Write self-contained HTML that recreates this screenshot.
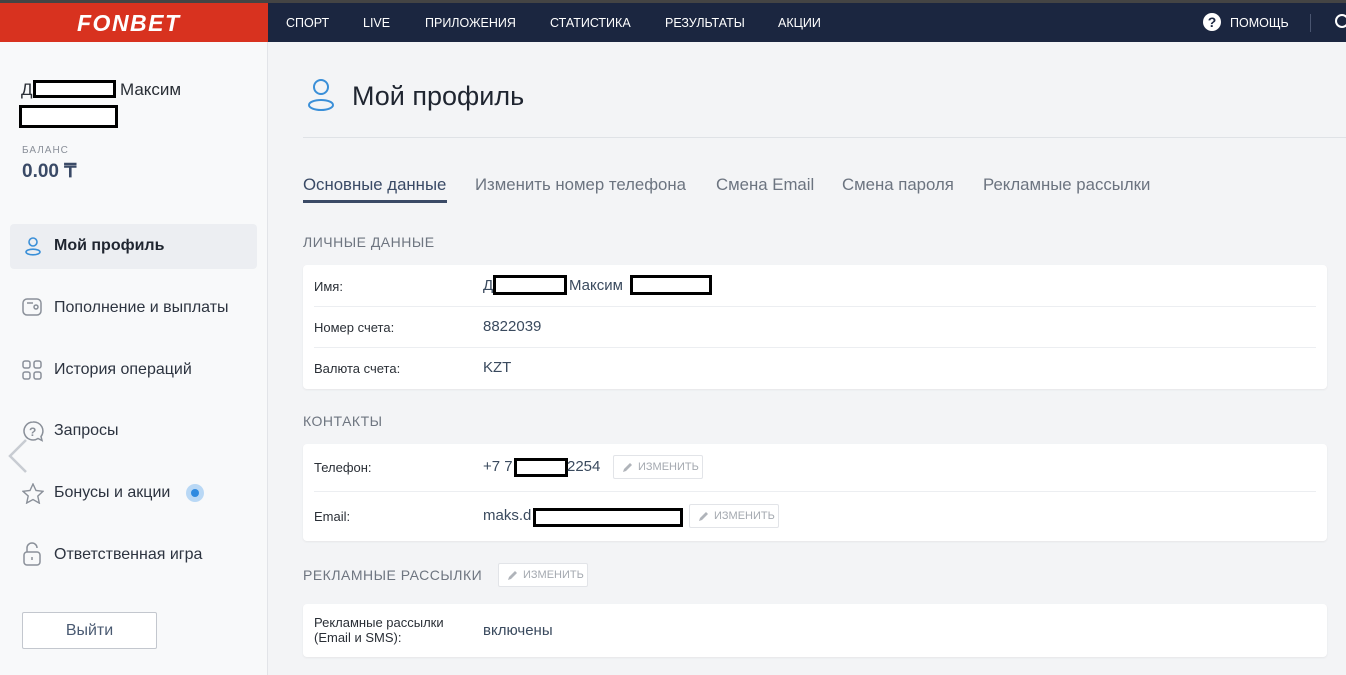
<!DOCTYPE html>
<html><head><meta charset="utf-8"><style>
*{margin:0;padding:0;box-sizing:border-box}
body{width:1346px;height:675px;overflow:hidden;background:#f3f4f6;font-family:"Liberation Sans","Noto Sans CJK SC",sans-serif;position:relative;color:#1f2b3a}
.a{position:absolute;white-space:nowrap}
.red{position:absolute;left:0;top:3px;width:268px;height:39px;background:#d8321f}
.nav{position:absolute;left:268px;top:3px;right:0;height:39px;background:#1b2640}
.topstrip{position:absolute;left:0;top:0;right:0;height:3px;background:#444}
.nl{color:#fff;font-size:12.5px;top:16px}
.side{position:absolute;left:0;top:42px;width:268px;height:633px;background:#f8f9fa;border-right:1px solid #e2e4e8}
.blk{position:absolute;border:3px solid #000;background:#fff}
.mi{font-size:16px;color:#2d3440}
.card{position:absolute;left:303px;width:1024px;background:#fff;border-radius:4px;box-shadow:0 1px 2px rgba(0,0,0,.06)}
.lbl{font-size:13px;color:#2a2f36}
.val{font-size:15px;color:#3a4a5e}
.sep{position:absolute;left:11px;right:11px;height:1px;background:#eceef1}
.sec{font-size:14px;color:#6e7580;letter-spacing:.5px}
.btn{position:absolute;border:1px solid #e2e4e8;border-radius:2px;height:24px;font-size:11px;color:#a4a9b0;line-height:22px;padding-left:24px;background:#fff}
.btn svg{position:absolute;left:8px;top:5px}
.tab{font-size:16.8px;color:#6c7480;top:175px}
</style></head><body>
<div class="topstrip"></div>
<div class="red"></div>
<div class="a" style="left:77px;top:10px;color:#fff;font-size:23px;font-weight:bold;font-style:italic;letter-spacing:1.5px">FONBET</div>
<div class="nav"></div>
<div class="a nl" style="left:286px">СПОРТ</div>
<div class="a nl" style="left:363px">LIVE</div>
<div class="a nl" style="left:425px">ПРИЛОЖЕНИЯ</div>
<div class="a nl" style="left:550px">СТАТИСТИКА</div>
<div class="a nl" style="left:665px">РЕЗУЛЬТАТЫ</div>
<div class="a nl" style="left:778px">АКЦИИ</div>
<div class="a" style="left:1203px;top:13px;width:18px;height:18px;border-radius:50%;background:#fff;color:#1b2640;font-weight:bold;font-size:14px;text-align:center;line-height:18px">?</div>
<div class="a nl" style="left:1230px">ПОМОЩЬ</div>
<div class="a" style="left:1310px;top:14px;width:1px;height:18px;background:#4a5570"></div>
<div class="a" style="left:1335px;top:14px;width:14px;height:14px;border:2px solid #fff;border-radius:50%"></div>

<div class="side"></div>
<div class="a" style="left:21px;top:80px;font-size:17px;color:#2a2f36">Д</div>
<div class="blk" style="left:33px;top:80px;width:83px;height:18px"></div>
<div class="a" style="left:120px;top:80px;font-size:17px;color:#2a2f36">Максим</div>
<div class="blk" style="left:19px;top:105px;width:99px;height:23px"></div>
<div class="a" style="left:22px;top:145px;font-size:10px;color:#8a9099;letter-spacing:1px">БАЛАНС</div>
<div class="a" style="left:22px;top:160px;font-size:19px;font-weight:bold;color:#3a4a66">0.00 ₸</div>
<div class="a" style="left:10px;top:224px;width:247px;height:45px;background:#eceef2;border-radius:4px"></div>
<svg class="a" style="left:24px;top:236px" width="18" height="20" viewBox="0 0 18 20" fill="none" stroke="#3a8fd8" stroke-width="1.6"><circle cx="9" cy="6" r="4"/><ellipse cx="9" cy="16" rx="7" ry="2.8"/></svg>
<div class="a mi" style="left:54px;top:237px;font-weight:bold;color:#1f2530">Мой профиль</div>
<svg class="a" style="left:22px;top:298px" width="20" height="18" viewBox="0 0 20 18" fill="none" stroke="#8a9099" stroke-width="1.5"><rect x="1" y="1" width="18" height="16" rx="4"/><circle cx="14" cy="9" r="2"/><path d="M5 5h6"/></svg>
<div class="a mi" style="left:54px;top:299px">Пополнение и выплаты</div>
<svg class="a" style="left:22px;top:360px" width="20" height="20" viewBox="0 0 20 20" fill="none" stroke="#8a9099" stroke-width="1.5"><rect x="1" y="1" width="7" height="7" rx="2"/><rect x="12" y="1" width="7" height="7" rx="2"/><rect x="1" y="12" width="7" height="7" rx="2"/><rect x="12" y="12" width="7" height="7" rx="2"/></svg>
<div class="a mi" style="left:54px;top:361px">История операций</div>
<svg class="a" style="left:22px;top:421px" width="22" height="22" viewBox="0 0 22 22" fill="none" stroke="#8a9099" stroke-width="1.5"><path d="M11 1a9 9 0 1 0 5 16.5l4 2-1-4A9 9 0 0 0 11 1z"/><text x="7" y="15" font-size="12" font-weight="bold" fill="#8a9099" stroke="none" font-family="Liberation Sans">?</text></svg>
<div class="a mi" style="left:54px;top:422px">Запросы</div>
<svg class="a" style="left:6px;top:438px" width="22" height="36" viewBox="0 0 22 36" fill="none" stroke="#c8ccd2" stroke-width="2.5"><path d="M20 2L4 18l16 16"/></svg>
<svg class="a" style="left:22px;top:483px" width="22" height="21" viewBox="0 0 22 21" fill="none" stroke="#8a9099" stroke-width="1.4"><path d="M11 1l3 6.5 7 .8-5.2 4.8 1.5 7L11 16.5 4.7 20l1.5-7L1 8.3l7-.8z"/></svg>
<div class="a mi" style="left:54px;top:484px">Бонусы и акции</div>
<div class="a" style="left:186px;top:484px;width:18px;height:18px;border-radius:50%;background:#b9d8f5"></div>
<div class="a" style="left:191px;top:489px;width:8px;height:8px;border-radius:50%;background:#2f8ae0"></div>
<svg class="a" style="left:22px;top:542px" width="20" height="24" viewBox="0 0 20 24" fill="none" stroke="#8a9099" stroke-width="1.5"><path d="M5 10V6a5 5 0 0 1 10 0"/><rect x="2" y="10" width="16" height="13" rx="3"/><path d="M10 15v3"/></svg>
<div class="a mi" style="left:54px;top:546px">Ответственная игра</div>
<div class="a" style="left:22px;top:612px;width:135px;height:37px;border:1px solid #c3c7ce;border-radius:2px;background:#fff;text-align:center;line-height:35px;font-size:16px;color:#4a5a72">Выйти</div>

<svg class="a" style="left:307px;top:78px" width="28" height="34" viewBox="0 0 28 34" fill="none" stroke="#3a8fd8" stroke-width="2"><circle cx="14" cy="9" r="7"/><ellipse cx="14" cy="27" rx="12" ry="5"/></svg>
<div class="a" style="left:352px;top:81px;font-size:27px;color:#1f2530">Мой профиль</div>
<div class="a" style="left:303px;top:137px;right:0;height:1px;background:#dfe2e6"></div>

<div class="a tab" style="left:303px;color:#3a4a66">Основные данные</div>
<div class="a" style="left:303px;top:200px;width:144px;height:3px;background:#3a4a66"></div>
<div class="a tab" style="left:475px">Изменить номер телефона</div>
<div class="a tab" style="left:716px">Смена Email</div>
<div class="a tab" style="left:842px">Смена пароля</div>
<div class="a tab" style="left:983px">Рекламные рассылки</div>

<div class="a sec" style="left:303px;top:234px">ЛИЧНЫЕ ДАННЫЕ</div>
<div class="card" style="top:265px;height:124px">
<div class="a lbl" style="left:11px;top:14px">Имя:</div>
<div class="a val" style="left:180px;top:12px">Д</div>
<div class="blk" style="left:190px;top:10px;width:74px;height:20px"></div>
<div class="a val" style="left:266px;top:12px">Максим</div>
<div class="blk" style="left:327px;top:10px;width:82px;height:20px"></div>
<div class="sep" style="top:41px"></div>
<div class="a lbl" style="left:11px;top:55px">Номер счета:</div>
<div class="a val" style="left:180px;top:53px">8822039</div>
<div class="sep" style="top:82px"></div>
<div class="a lbl" style="left:11px;top:96px">Валюта счета:</div>
<div class="a val" style="left:180px;top:94px">KZT</div>
</div>

<div class="a sec" style="left:303px;top:413px">КОНТАКТЫ</div>
<div class="card" style="top:444px;height:97px">
<div class="a lbl" style="left:11px;top:16px">Телефон:</div>
<div class="a val" style="left:180px;top:14px">+7 7</div>
<div class="blk" style="left:211px;top:14px;width:54px;height:19px"></div>
<div class="a val" style="left:264px;top:14px">2254</div>
<div class="btn" style="left:310px;top:11px;width:90px"><svg width="12" height="12" viewBox="0 0 12 12"><path d="M1 11l1-3 6-6 2 2-6 6z" fill="#b0b4ba"/></svg>ИЗМЕНИТЬ</div>
<div class="sep" style="top:47px"></div>
<div class="a lbl" style="left:11px;top:65px">Email:</div>
<div class="a val" style="left:180px;top:63px">maks.d</div>
<div class="blk" style="left:230px;top:64px;width:150px;height:19px"></div>
<div class="btn" style="left:386px;top:60px;width:90px"><svg width="12" height="12" viewBox="0 0 12 12"><path d="M1 11l1-3 6-6 2 2-6 6z" fill="#b0b4ba"/></svg>ИЗМЕНИТЬ</div>
</div>

<div class="a sec" style="left:303px;top:567px">РЕКЛАМНЫЕ РАССЫЛКИ</div>
<div class="btn" style="left:498px;top:563px;width:90px"><svg width="12" height="12" viewBox="0 0 12 12"><path d="M1 11l1-3 6-6 2 2-6 6z" fill="#b0b4ba"/></svg>ИЗМЕНИТЬ</div>
<div class="card" style="top:604px;height:53px">
<div class="a lbl" style="left:11px;top:11px;line-height:15px">Рекламные рассылки<br>(Email и SMS):</div>
<div class="a val" style="left:180px;top:18px">включены</div>
</div>
</body></html>
